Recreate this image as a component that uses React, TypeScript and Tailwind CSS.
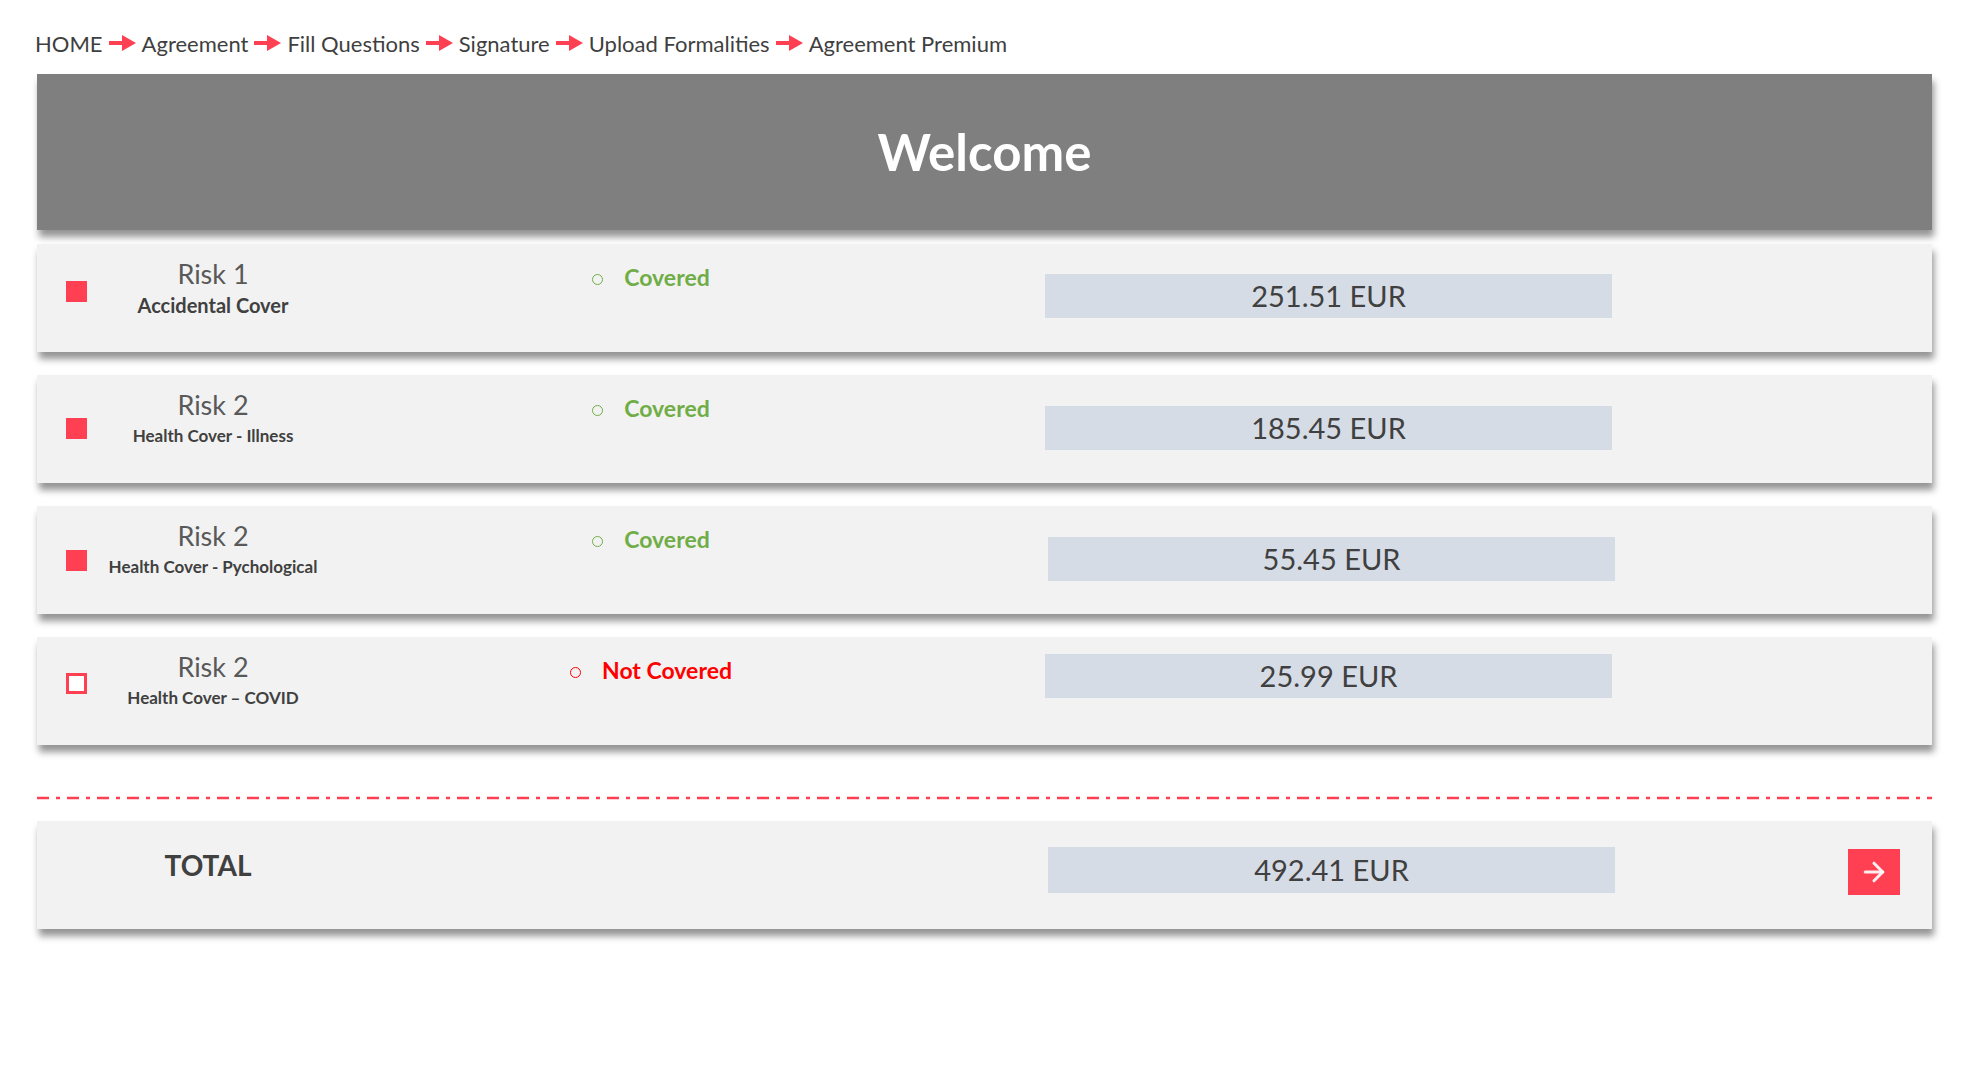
import { ArrowRight } from 'lucide-react';

type Risk = {
  title: string;
  subtitle: string;
  subSize: string;
  covered: boolean;
  checked: boolean;
  amount: string;
  checkTop: string;
  boxTop: string;
  boxLeft: string;
};

const risks: Risk[] = [
  {
    title: 'Risk 1',
    subtitle: 'Accidental Cover',
    subSize: 'text-[20px]',
    covered: true,
    checked: true,
    amount: '251.51 EUR',
    checkTop: 'mt-[37px]',
    boxTop: 'mt-[30px]',
    boxLeft: 'ml-[82px]',
  },
  {
    title: 'Risk 2',
    subtitle: 'Health Cover - Illness',
    subSize: 'text-[17px]',
    covered: true,
    checked: true,
    amount: '185.45 EUR',
    checkTop: 'mt-[43px]',
    boxTop: 'mt-[31px]',
    boxLeft: 'ml-[82px]',
  },
  {
    title: 'Risk 2',
    subtitle: 'Health Cover - Pychological',
    subSize: 'text-[17px]',
    covered: true,
    checked: true,
    amount: '55.45 EUR',
    checkTop: 'mt-[44px]',
    boxTop: 'mt-[31px]',
    boxLeft: 'ml-[85px]',
  },
  {
    title: 'Risk 2',
    subtitle: 'Health Cover \u2013 COVID',
    subSize: 'text-[17px]',
    covered: false,
    checked: false,
    amount: '25.99 EUR',
    checkTop: 'mt-[36px]',
    boxTop: 'mt-[17px]',
    boxLeft: 'ml-[82px]',
  },
];

const steps = ['Agreement', 'Fill Questions', 'Signature', 'Upload Formalities', 'Agreement Premium'];

function StepArrow() {
  return (
    <svg width="27" height="16" viewBox="0 0 27 16" className="shrink-0">
      <rect x="0" y="6" width="15" height="4" fill="#FF4052" />
      <polygon points="13,0 27,8 13,16" fill="#FF4052" />
    </svg>
  );
}

function Card({ children }: { children: React.ReactNode }) {
  return (
    <div className="h-[108px] bg-[#F2F2F2] shadow-[2px_7px_7px_rgba(0,0,0,0.42)] flex items-start">
      {children}
    </div>
  );
}

function RiskRow({ risk }: { risk: Risk }) {
  return (
    <Card>
      {/* checkbox */}
      <div
        className={
          risk.checked
            ? `ml-[29px] ${risk.checkTop} w-[21px] h-[21px] shrink-0 bg-[#FF4052]`
            : `ml-[29px] ${risk.checkTop} w-[21px] h-[21px] shrink-0 bg-white border-[3px] border-[#FF4052]`
        }
      />

      {/* label */}
      <div className="w-[252px] shrink-0 flex flex-col items-center pt-[12px]">
        <span className="text-[27px] leading-[36px] text-[#595959]">{risk.title}</span>
        <span className={`${risk.subSize} leading-[26px] font-bold text-[#404040]`}>
          {risk.subtitle}
        </span>
      </div>

      {/* status */}
      <div className="w-[624px] shrink-0 flex justify-center items-center gap-[21px] pt-[17px]">
        <span
          className={
            risk.covered
              ? 'w-[11px] h-[11px] rounded-full border-[1.5px] border-[#70AD47] mt-[4px]'
              : 'w-[11px] h-[11px] rounded-full border-[1.5px] border-[#FF0000] mt-[4px]'
          }
        />
        <span
          className={
            risk.covered
              ? 'text-[23px] leading-[32px] font-bold text-[#70AD47]'
              : 'text-[23px] leading-[32px] font-bold text-[#FF0000]'
          }
        >
          {risk.covered ? 'Covered' : 'Not Covered'}
        </span>
      </div>

      {/* amount */}
      <div
        className={`${risk.boxLeft} ${risk.boxTop} w-[567px] h-[44px] shrink-0 bg-[#D6DCE5] flex items-center justify-center text-[29px] text-[#404040]`}
      >
        {risk.amount}
      </div>
    </Card>
  );
}

export default function App() {
  return (
    <div className="min-h-[1082px] bg-white font-['Lato',sans-serif]">
      <div className="ml-[37px] w-[1895px]">
        {/* breadcrumb */}
        <nav className="flex items-center h-[74px] -ml-[2px] pt-[12px] text-[22px] text-[#3F3F3F]">
          <span>HOME</span>
          {steps.map((s) => (
            <span key={s} className="flex items-center">
              <span className="mx-[6px] flex">
                <StepArrow />
              </span>
              <span>{s}</span>
            </span>
          ))}
        </nav>

        {/* header */}
        <div className="h-[156px] bg-[#7F7F7F] shadow-[2px_7px_7px_rgba(0,0,0,0.42)] flex items-center justify-center">
          <h1 className="text-[51px] font-bold text-white">Welcome</h1>
        </div>

        {/* risks */}
        <div className="flex flex-col gap-[23px] mt-[14px]">
          {risks.map((r, i) => (
            <RiskRow key={i} risk={r} />
          ))}
        </div>

        {/* separator */}
        <svg className="block mt-[51px]" width="1895" height="4">
          <line
            x1="0"
            y1="2"
            x2="1895"
            y2="2"
            stroke="#FF4052"
            strokeWidth="2.5"
            strokeDasharray="12 7 4 7"
          />
        </svg>

        {/* total */}
        <div className="mt-[21px]">
          <Card>
            <div className="w-[342px] shrink-0 flex justify-center pt-[25px]">
              <span className="text-[28px] leading-[38px] font-bold text-[#404040]">TOTAL</span>
            </div>
            <div className="ml-[669px] mt-[26px] w-[567px] h-[46px] shrink-0 bg-[#D6DCE5] flex items-center justify-center text-[29px] text-[#404040]">
              492.41 EUR
            </div>
            <button className="ml-[233px] mt-[28px] w-[52px] h-[46px] shrink-0 bg-[#FF4052] flex items-center justify-center">
              <ArrowRight className="text-white/90" size={30} strokeWidth={2.5} />
            </button>
          </Card>
        </div>
      </div>
    </div>
  );
}
